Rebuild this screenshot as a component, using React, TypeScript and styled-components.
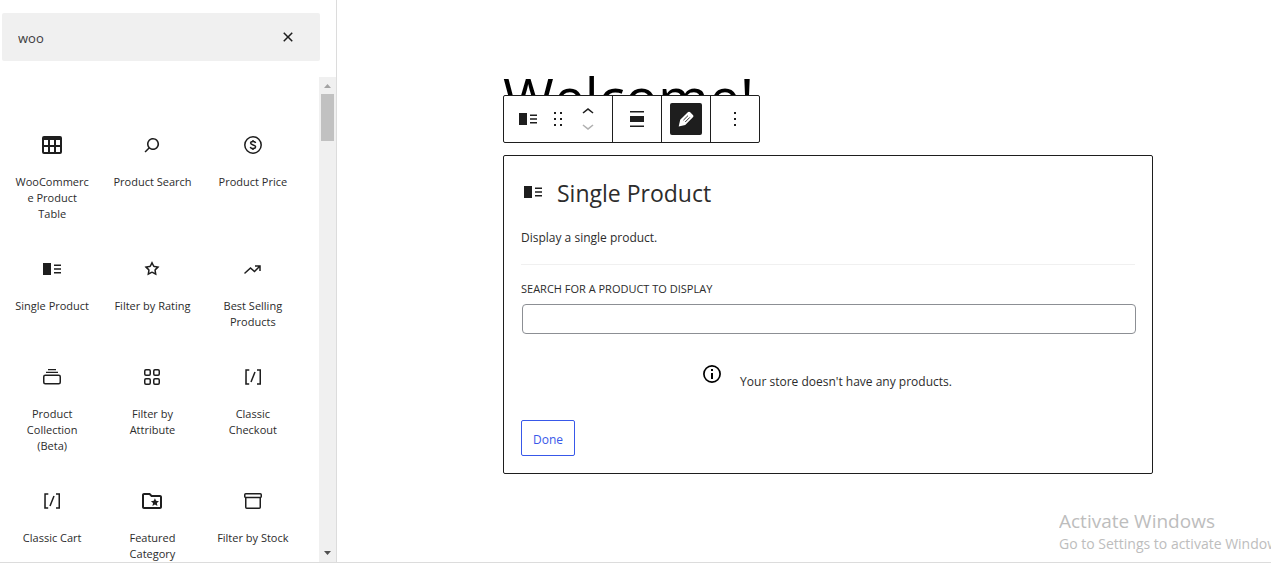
import React from "react";
import styled, { createGlobalStyle } from "styled-components";

const GlobalStyle = createGlobalStyle`
  *, *::before, *::after { box-sizing: border-box; }
  body {
    margin: 0;
    background: #fff;
    color: #2c2c2c;
    font-family: "Open Sans", "Noto Sans", sans-serif;
    font-size: 12px;
    line-height: 20px;
  }
  button, input { font: inherit; color: inherit; }
`;

const Page = styled.div`
  position: relative;
  display: flex;
  flex-direction: column;
  height: 100vh;
  padding-bottom: 6px;
  overflow: hidden;
`;

const Workspace = styled.div`
  flex: 1;
  min-height: 0;
  display: flex;
  border-bottom: 1px solid #dcdcdc;
`;

const Sidebar = styled.aside`
  flex: none;
  width: 337px;
  display: flex;
  flex-direction: column;
  border-right: 1px solid #dcdcdc;
`;

const SearchBox = styled.div`
  display: flex;
  align-items: center;
  height: 48px;
  margin: 13px 16px 16px 2px;
  padding: 0 20px 0 16px;
  background: #f0f0f0;
  border-radius: 2px;
`;

const SearchInput = styled.input`
  flex: 1;
  min-width: 0;
  height: 32px;
  padding: 2px 0 0;
  border: 0;
  outline: 0;
  background: transparent;
  font-size: 13px;
  color: #3c3c3c;
`;

const IconButton = styled.button<{ $w?: number; $h?: number; $muted?: boolean }>`
  display: flex;
  align-items: center;
  justify-content: center;
  width: ${(p) => p.$w ?? 24}px;
  height: ${(p) => p.$h ?? 24}px;
  padding: 0;
  border: 0;
  background: transparent;
  overflow: hidden;
  color: ${(p) => (p.$muted ? "#b0b0b0" : "#1e1e1e")};
`;

const ScrollArea = styled.div`
  flex: 1;
  min-height: 0;
  display: flex;
`;

const BlockGrid = styled.div`
  flex: 1;
  display: grid;
  grid-template-columns: repeat(3, 1fr);
  align-content: start;
  padding: 39px 16px 0 2px;
  overflow: hidden;
`;

const BlockItem = styled.button`
  display: flex;
  flex-direction: column;
  align-items: center;
  justify-content: flex-start;
  gap: 17px;
  min-width: 0;
  padding: 17px 11px 18px;
  border: 0;
  background: transparent;
`;

const BlockLabel = styled.span`
  max-width: 100%;
  font-size: 11px;
  line-height: 16px;
  text-align: center;
  overflow-wrap: anywhere;
`;

const ScrollTrack = styled.div`
  width: 17px;
  display: flex;
  flex-direction: column;
  align-items: center;
  background: #f0f0f0;
`;

const ScrollThumb = styled.div`
  width: 13px;
  height: 47px;
  margin-bottom: auto;
  background: #c1c1c1;
`;

const Canvas = styled.main`
  flex: 1;
  min-width: 0;
  padding: 60px 118px 0 166px;
`;

const PostTitle = styled.h1`
  margin: 0;
  height: 95px;
  font-size: 55px;
  line-height: 74px;
  font-weight: 400;
  color: #000;
`;

const BlockWrap = styled.div`
  position: relative;
`;

const Toolbar = styled.div`
  position: absolute;
  left: 0;
  bottom: calc(100% + 12px);
  display: flex;
  height: 48px;
  background: #fff;
  border: 1px solid #1e1e1e;
  border-radius: 2px;
`;

const ToolGroup = styled.div`
  display: flex;
  align-items: center;
  justify-content: center;
  min-width: 48px;
  & + & {
    border-left: 1px solid #1e1e1e;
    min-width: 49px;
  }
`;

const BlockTools = styled(ToolGroup)`
  gap: 6px;
  width: 108px;
`;

const Movers = styled.div`
  display: flex;
  flex-direction: column;
`;

const ActiveTool = styled(IconButton)`
  border-radius: 2px;
  background: #1e1e1e;
  color: #fff;
`;

const Card = styled.section`
  display: flex;
  flex-direction: column;
  padding: 20px 17px 17px;
  border: 1px solid #1e1e1e;
  border-radius: 2px;
  background: #fff;
`;

const CardHeader = styled.header`
  display: flex;
  align-items: center;
  gap: 12px;
  height: 32px;
`;

const CardTitle = styled.h2`
  margin: 0;
  padding-top: 2px;
  font-size: 23px;
  line-height: 32px;
  font-weight: 400;
`;

const CardText = styled.p`
  margin: 20px 0 0;
  padding-bottom: 16px;
  border-bottom: 1px solid #f0f0f0;
`;

const FieldLabel = styled.label`
  margin-top: 16px;
  font-size: 11px;
  line-height: 16px;
  text-transform: uppercase;
`;

const ProductInput = styled.input`
  height: 30px;
  margin: 7px -1px 0 1px;
  padding: 0 8px;
  border: 1px solid #8c8f94;
  border-radius: 4px;
  background: #fff;
`;

const EmptyNotice = styled.div`
  display: flex;
  justify-content: center;
  gap: 16px;
  margin: 28px 0;
  padding-right: 4px;
  color: #000;
`;

const NoticeText = styled.span`
  padding-top: 10px;
  color: #2c2c2c;
`;

const DoneButton = styled.button`
  align-self: flex-start;
  height: 36px;
  width: 54px;
  padding: 4px 0 0;
  border: 1px solid #3858e9;
  border-radius: 2px;
  background: #fff;
  color: #3858e9;
`;

const Watermark = styled.div`
  position: absolute;
  right: 0;
  bottom: 14px;
  width: 212px;
  overflow: hidden;
  white-space: nowrap;
  color: #bdbdbd;
  font-size: 14px;
  line-height: 22px;
  pointer-events: none;
`;

const WatermarkTitle = styled.div`
  font-size: 19px;
  line-height: 24px;
`;

const Svg = ({ children }: { children: React.ReactNode }) => (
  <svg width="24" height="24" viewBox="0 0 24 24" fill="currentColor" color="#1e1e1e" aria-hidden="true">
    {children}
  </svg>
);

const PlainSvg = ({ children }: { children: React.ReactNode }) => (
  <svg width="24" height="24" viewBox="0 0 24 24" fill="currentColor" aria-hidden="true">
    {children}
  </svg>
);

const SingleProductIcon = () => (
  <Svg>
    <path d="M3 18h8V6H3v12zM14 7.5V9h7V7.5h-7zm0 5.3h7v-1.5h-7v1.5zm0 3.7h7V15h-7v1.5z" />
  </Svg>
);

const TableIcon = () => (
  <Svg>
    <path
      fillRule="evenodd"
      d="M4 3h16a2 2 0 0 1 2 2v14a2 2 0 0 1-2 2H4a2 2 0 0 1-2-2V5a2 2 0 0 1 2-2zM4 7v5h4V7zM10 7v5h4V7zM16 7v5h4V7zM4 14v5h4v-5zM10 14v5h4v-5zM16 14v5h4v-5z"
    />
  </Svg>
);

const SearchIcon = () => (
  <Svg>
    <path d="M13 5c-3.3 0-6 2.7-6 6 0 1.4.5 2.7 1.3 3.7l-3.8 3.8 1.1 1.1 3.8-3.8c1 .8 2.3 1.3 3.7 1.3 3.3 0 6-2.7 6-6S16.3 5 13 5zm0 10.5c-2.5 0-4.5-2-4.5-4.5s2-4.5 4.5-4.5 4.5 2 4.5 4.5-2 4.5-4.5 4.5z" />
  </Svg>
);

const PriceIcon = () => (
  <Svg>
    <g fill="none" stroke="currentColor" strokeWidth="1.5">
      <circle cx="12" cy="12" r="8.200" />
      <path d="M14.600 10c-.2-1-1.200-1.600-2.500-1.600-1.500 0-2.500.6-2.500 1.700 0 2.400 5 1.300 5 3.700 0 1.200-1.100 1.800-2.500 1.800s-2.500-.6-2.700-1.800M12 7v1.500M12 15.500V17" />
    </g>
  </Svg>
);

const StarIcon = () => (
  <Svg>
    <path
      fillRule="evenodd"
      d="M9.706 8.646a.25.25 0 01-.188.137l-4.626.672a.25.25 0 00-.139.427l3.348 3.262a.25.25 0 01.072.222l-.79 4.607a.25.25 0 00.362.264l4.138-2.176a.25.25 0 01.233 0l4.137 2.175a.25.25 0 00.363-.263l-.79-4.607a.25.25 0 01.072-.222l3.347-3.262a.25.25 0 00-.139-.427l-4.626-.672a.25.25 0 01-.188-.137l-2.069-4.192a.25.25 0 00-.448 0L9.706 8.646zM12 7.39l-.948 1.921a1.75 1.75 0 01-1.317.957l-2.12.308 1.534 1.495c.412.402.6.982.503 1.55l-.362 2.11 1.896-.997a1.75 1.75 0 011.629 0l1.895.997-.362-2.11a1.75 1.75 0 01.504-1.55l1.533-1.495-2.12-.308a1.75 1.75 0 01-1.317-.957L12 7.39z"
    />
  </Svg>
);

const TrendIcon = () => (
  <Svg>
    <path d="M3.445 16.505a.75.75 0 001.06.05l5.005-4.55 4.024 3.521 4.716-4.715V14h1.5V8.25H14v1.5h3.19l-3.724 3.723L9.49 9.995l-5.995 5.45a.75.75 0 00-.05 1.06z" />
  </Svg>
);

const CollectionIcon = () => (
  <Svg>
    <rect x="3.75" y="10.25" width="16.500" height="8.500" rx="1.500" fill="none" stroke="currentColor" strokeWidth="1.5" />
    <path d="M8 4h8v1.200H8zM6 6.800h12V8H6z" />
  </Svg>
);

const AttributeIcon = () => (
  <Svg>
    <g fill="none" stroke="currentColor" strokeWidth="1.5">
      <rect x="4.75" y="4.75" width="5.500" height="5.500" rx="1.200" />
      <rect x="13.750" y="4.75" width="5.500" height="5.500" rx="1.200" />
      <rect x="4.75" y="13.750" width="5.500" height="5.500" rx="1.200" />
      <rect x="13.750" y="13.750" width="5.500" height="5.500" rx="1.200" />
    </g>
  </Svg>
);

const ShortcodeIcon = () => (
  <Svg>
    <path d="M16 4.2v1.5h2.5v12.5H16v1.5h4V4.2h-4zM4.2 19.8h4v-1.5H5.8V5.8h2.5V4.2h-4l-.1 15.6zm5.1-3.1l1.4.6 4-10-1.4-.6-4 10z" />
  </Svg>
);

const FolderStarIcon = () => (
  <Svg>
    <path
      fillRule="evenodd"
      d="M20 6h-8l-2-2H4c-1.100 0-2 .9-2 2v12c0 1.100.9 2 2 2h16c1.100 0 2-.9 2-2V8c0-1.100-.9-2-2-2zm0 12H4V6h5.170l2 2H20v10z"
    />
    <path d="M14.920 9.200l1.180 2.640 2.900.3-2.150 1.920.6 2.820-2.530-1.430-2.500 1.430.62-2.820-2.170-1.920 2.900-.3z" />
  </Svg>
);

const StockIcon = () => (
  <Svg>
    <g fill="none" stroke="currentColor" strokeWidth="1.5">
      <rect x="3.750" y="4.750" width="16.500" height="3.800" rx="1" />
      <path d="M4.750 8.500v9.750a1 1 0 0 0 1 1h12.500a1 1 0 0 0 1-1V8.500" />
    </g>
  </Svg>
);

const CloseIcon = () => (
  <Svg>
    <path d="M12 13.06l3.712 3.713 1.061-1.06L13.061 12l3.712-3.712-1.06-1.06L12 10.938 8.288 7.227l-1.061 1.06L10.939 12l-3.712 3.712 1.06 1.061L12 13.061z" />
  </Svg>
);

const DragIcon = () => (
  <Svg>
    <path d="M8 7h2V5H8v2zm0 6h2v-2H8v2zm0 6h2v-2H8v2zm6-14v2h2V5h-2zm0 8h2v-2h-2v2zm0 6h2v-2h-2v2z" />
  </Svg>
);

const UpIcon = () => (
  <PlainSvg>
    <path d="M6.500 12.400L12 8l5.500 4.400-.9 1.200L12 10l-4.500 3.600-1-1.200z" />
  </PlainSvg>
);

const DownIcon = () => (
  <PlainSvg>
    <path d="M17.500 11.600L12 16l-5.500-4.400.9-1.200L12 14l4.500-3.600 1 1.200z" />
  </PlainSvg>
);

const AlignIcon = () => (
  <Svg>
    <path d="M19 5.500H5V4h14v1.500ZM19 20H5v-1.500h14V20ZM5 9h14v6H5V9Z" />
  </Svg>
);

const PencilIcon = () => (
  <PlainSvg>
    <path d="M13.800 5.200c.7-.7 1.700-.7 2.400 0l2.700 2.700c.7.7.7 1.700 0 2.400l-7.700 7.600-6.500 1.500 1.500-6.600z" />
    <path d="M9.400 13.200l4.600-4.600M11.200 15l4.600-4.600" stroke="#1e1e1e" strokeWidth=".9" fill="none" />
  </PlainSvg>
);

const MoreIcon = () => (
  <Svg>
    <path d="M13 19h-2v-2h2v2zm0-6h-2v-2h2v2zm0-6h-2V5h2v2z" />
  </Svg>
);

const InfoIcon = () => (
  <PlainSvg>
    <circle cx="12" cy="12" r="8.100" fill="none" stroke="currentColor" strokeWidth="1.700" />
    <path d="M11 7h2v2h-2zM11 11h2v6h-2z" />
  </PlainSvg>
);

const ScrollArrow = ({ down }: { down?: boolean }) => (
  <svg width="17" height="17" viewBox="0 0 17 17" aria-hidden="true">
    <path d={down ? "M5 6h7l-3.500 4z" : "M5 11h7L8.500 7z"} fill={down ? "#505050" : "#a3a3a3"} />
  </svg>
);

const blocks: { label: string; Icon: () => React.JSX.Element }[] = [
  { label: "WooCommerce Product Table", Icon: TableIcon },
  { label: "Product Search", Icon: SearchIcon },
  { label: "Product Price", Icon: PriceIcon },
  { label: "Single Product", Icon: SingleProductIcon },
  { label: "Filter by Rating", Icon: StarIcon },
  { label: "Best Selling Products", Icon: TrendIcon },
  { label: "Product Collection (Beta)", Icon: CollectionIcon },
  { label: "Filter by Attribute", Icon: AttributeIcon },
  { label: "Classic Checkout", Icon: ShortcodeIcon },
  { label: "Classic Cart", Icon: ShortcodeIcon },
  { label: "Featured Category", Icon: FolderStarIcon },
  { label: "Filter by Stock", Icon: StockIcon },
];

export default function App() {
  return (
    <>
      <GlobalStyle />
      <Page>
        <Workspace>
          <Sidebar>
            <SearchBox>
              <SearchInput type="text" aria-label="Search for blocks" defaultValue="woo" />
              <IconButton type="button" aria-label="Reset search">
                <CloseIcon />
              </IconButton>
            </SearchBox>
            <ScrollArea>
              <BlockGrid>
                {blocks.map(({ label, Icon }) => (
                  <BlockItem key={label} type="button">
                    <Icon />
                    <BlockLabel>{label}</BlockLabel>
                  </BlockItem>
                ))}
              </BlockGrid>
              <ScrollTrack>
                <ScrollArrow />
                <ScrollThumb />
                <ScrollArrow down />
              </ScrollTrack>
            </ScrollArea>
          </Sidebar>
          <Canvas>
            <PostTitle>Welcome!</PostTitle>
            <BlockWrap>
              <Toolbar role="toolbar" aria-label="Block tools">
                <BlockTools>
                  <IconButton type="button" aria-label="Single Product">
                    <SingleProductIcon />
                  </IconButton>
                  <IconButton type="button" aria-label="Drag">
                    <DragIcon />
                  </IconButton>
                  <Movers>
                    <IconButton type="button" aria-label="Move up" $h={14}>
                      <UpIcon />
                    </IconButton>
                    <IconButton type="button" aria-label="Move down" $h={14} $muted>
                      <DownIcon />
                    </IconButton>
                  </Movers>
                </BlockTools>
                <ToolGroup>
                  <IconButton type="button" aria-label="Align">
                    <AlignIcon />
                  </IconButton>
                </ToolGroup>
                <ToolGroup>
                  <ActiveTool type="button" aria-label="Edit" $w={32} $h={32}>
                    <PencilIcon />
                  </ActiveTool>
                </ToolGroup>
                <ToolGroup>
                  <IconButton type="button" aria-label="Options">
                    <MoreIcon />
                  </IconButton>
                </ToolGroup>
              </Toolbar>
              <Card>
                <CardHeader>
                  <SingleProductIcon />
                  <CardTitle>Single Product</CardTitle>
                </CardHeader>
                <CardText>Display a single product.</CardText>
                <FieldLabel htmlFor="product-search">Search for a product to display</FieldLabel>
                <ProductInput id="product-search" type="text" />
                <EmptyNotice>
                  <InfoIcon />
                  <NoticeText>Your store doesn't have any products.</NoticeText>
                </EmptyNotice>
                <DoneButton type="button">Done</DoneButton>
              </Card>
            </BlockWrap>
          </Canvas>
        </Workspace>
        <Watermark>
          <WatermarkTitle>Activate Windows</WatermarkTitle>
          Go to Settings to activate Windows.
        </Watermark>
      </Page>
    </>
  );
}
